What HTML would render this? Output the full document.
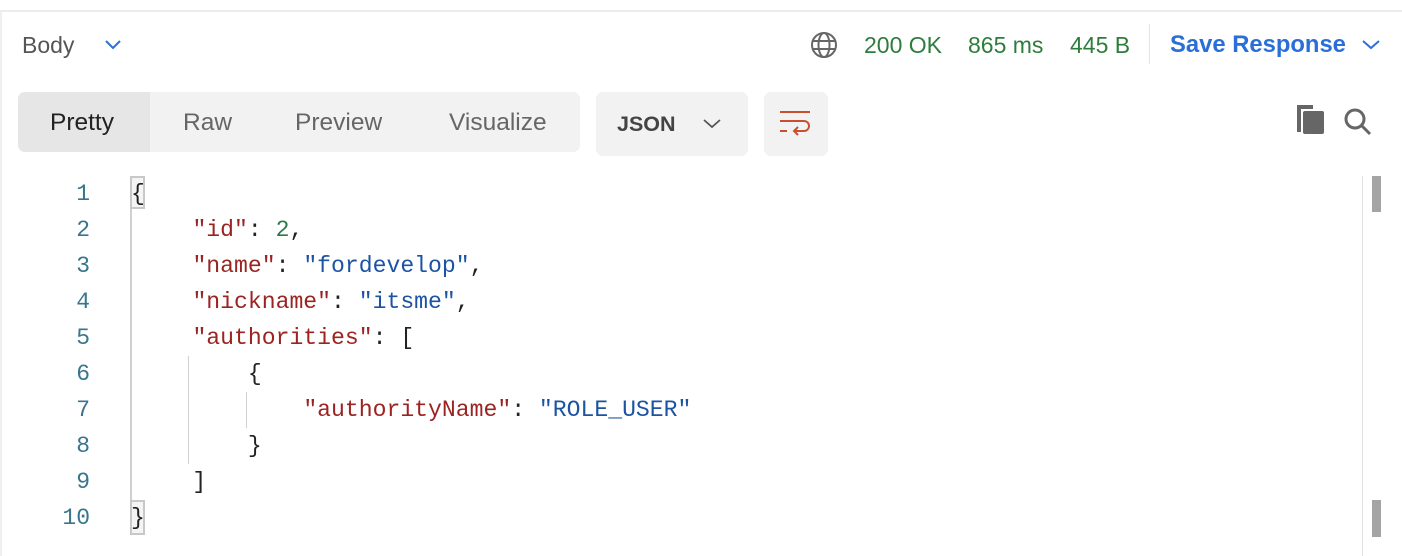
<!DOCTYPE html>
<html><head><meta charset="utf-8"><style>
*{margin:0;padding:0;box-sizing:border-box}
body{width:1402px;height:556px;background:#fff;position:relative;overflow:hidden;font-family:"Liberation Sans",sans-serif}
.a{position:absolute}
.sans{font-size:21px;white-space:nowrap}
.code{font-family:"Liberation Mono",monospace;font-size:23.1px;white-space:pre;line-height:36px}
.k{color:#9b2423}.s{color:#1d53a3}.n{color:#2b7a4b}.p{color:#222}
.ln{color:#39758e;text-align:right;width:50px;font-family:"Liberation Mono",monospace;font-size:23px;line-height:36px}
.tab{font-size:24.5px;top:109px}
</style></head><body>
<div class="a" style="left:0;top:10px;width:1402px;height:2px;background:#ececec"></div>
<div class="a" style="left:0;top:10px;width:2px;height:546px;background:#efefef"></div>

<div class="a sans" style="left:22px;top:32px;color:#555;font-size:23px">Body</div>
<svg class="a" style="left:104px;top:38px" width="18" height="12"><path d="M2 3 L9 10 L16 3" fill="none" stroke="#2f6fd6" stroke-width="2"/></svg>

<svg class="a" style="left:809px;top:30px" width="30" height="30" viewBox="0 0 30 30" fill="none" stroke="#666" stroke-width="2"><circle cx="15" cy="15" r="12"/><ellipse cx="15" cy="15" rx="5.5" ry="12"/><path d="M3 11H27M3 19H27"/></svg>
<div class="a sans" style="left:864px;top:32px;color:#2e7d3c;font-size:23px">200&nbsp;OK</div>
<div class="a sans" style="left:968px;top:32px;color:#2e7d3c;font-size:23px">865 ms</div>
<div class="a sans" style="left:1070px;top:32px;color:#2e7d3c;font-size:23px">445 B</div>
<div class="a" style="left:1149px;top:24px;width:1px;height:40px;background:#e4e4e4"></div>
<div class="a sans" style="left:1170px;top:31px;color:#2a6fd8;font-weight:bold;font-size:23.8px">Save Response</div>
<svg class="a" style="left:1361px;top:38px" width="20" height="12"><path d="M2 3 L10 10 L18 3" fill="none" stroke="#2f6fd6" stroke-width="2"/></svg>

<div class="a" style="left:18px;top:92px;width:562px;height:60px;background:#f2f2f2;border-radius:7px"></div>
<div class="a" style="left:18px;top:92px;width:132px;height:60px;background:#e6e6e6;border-radius:7px 0 0 7px"></div>
<div class="a sans tab" style="left:50px;color:#222">Pretty</div>
<div class="a sans tab" style="left:183px;color:#666">Raw</div>
<div class="a sans tab" style="left:295px;color:#666">Preview</div>
<div class="a sans tab" style="left:449px;color:#666">Visualize</div>

<div class="a" style="left:596px;top:92px;width:152px;height:64px;background:#f2f2f2;border-radius:7px"></div>
<div class="a sans" style="left:617px;top:112px;color:#444;font-weight:bold;font-size:21.5px">JSON</div>
<svg class="a" style="left:702px;top:117px" width="20" height="12"><path d="M2 3 L10 10 L18 3" fill="none" stroke="#555" stroke-width="1.8"/></svg>

<div class="a" style="left:764px;top:92px;width:64px;height:64px;background:#f2f2f2;border-radius:7px"></div>
<svg class="a" style="left:778px;top:106px" width="36" height="36" viewBox="0 0 36 36" fill="none" stroke="#c9502e" stroke-width="2"><path d="M2 6H32M2 15H26a5 5 0 0 1 0 10H16M2 25H9M20 21l-4 4 4 4"/></svg>

<svg class="a" style="left:1295px;top:104px" width="32" height="32"><path d="M2 1H18V5H6V28H2Z" fill="#666"/><rect x="8" y="7" width="21" height="23" rx="2" fill="#666"/></svg>
<svg class="a" style="left:1342px;top:106px" width="32" height="32" fill="none" stroke="#666" stroke-width="3"><circle cx="13" cy="13" r="9"/><path d="M20 20L28 28"/></svg>

<div class="a" style="left:1362px;top:176px;width:1px;height:380px;background:#e0e0e0"></div>
<div class="a" style="left:1372px;top:176px;width:9px;height:36px;background:#a4a4a4"></div>
<div class="a" style="left:1372px;top:500px;width:9px;height:37px;background:#a4a4a4"></div>

<div class="a ln" style="left:40px;top:176px">1<br>2<br>3<br>4<br>5<br>6<br>7<br>8<br>9<br>10</div>

<div class="a" style="left:130px;top:176px;width:15px;height:33px;border:2px solid #c8c8c8;background:#f4f4f4"></div>
<div class="a" style="left:130px;top:500px;width:15px;height:35px;border:2px solid #c8c8c8;background:#f4f4f4"></div>
<div class="a" style="left:130px;top:209px;width:2px;height:291px;background:#d0d0d0"></div>
<div class="a" style="left:188px;top:356px;width:1px;height:108px;background:#d0d0d0"></div>
<div class="a" style="left:246px;top:392px;width:1px;height:36px;background:#d0d0d0"></div>

<div class="a code p" style="left:137px;top:176px"><span style="margin-left:-6px">{</span>
    <span class="k">"id"</span>: <span class="n">2</span>,
    <span class="k">"name"</span>: <span class="s">"fordevelop"</span>,
    <span class="k">"nickname"</span>: <span class="s">"itsme"</span>,
    <span class="k">"authorities"</span>: [
        {
            <span class="k">"authorityName"</span>: <span class="s">"ROLE_USER"</span>
        }
    ]
<span style="margin-left:-6px">}</span></div>
</body></html>
